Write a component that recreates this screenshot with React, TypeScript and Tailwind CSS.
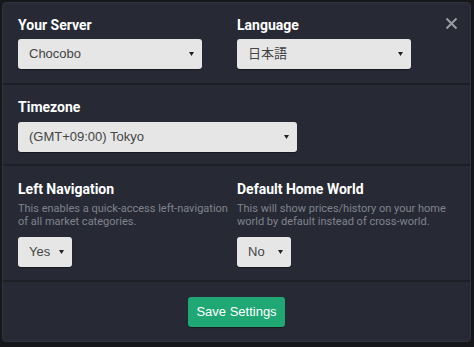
import React from "react"

function FakeSelect({ value, width }: { value: string; width: string }) {
  return (
    <div
      className={`${width} h-[30px] flex items-center justify-between pl-[11px] pr-[8px] bg-[#e6e6e6] rounded-[3px] shadow-[0_1px_1px_rgba(0,0,0,0.4)] text-[13px] text-[#444] font-['Liberation_Sans','Noto_Sans_CJK_JP',sans-serif]`}
    >
      <span>{value}</span>
      <svg width="5" height="4" viewBox="0 0 5 4" className="text-[#222]">
        <path d="M0 0 L5 0 L2.5 4 Z" fill="currentColor" />
      </svg>
    </div>
  )
}

export default function App() {
  return (
    <div className="w-[474px] h-[347px] bg-[#16171b] p-[2px] pr-[3px] pb-[5px] font-['Roboto',sans-serif]">
      <div className="relative h-full bg-[#272a35] rounded-[4px] border border-[#30333e] flex flex-col">
        {/* close */}
        <button className="absolute right-[12px] top-[14px] text-[#9a9ca3]">
          <svg width="13" height="13" viewBox="0 0 13 13">
            <path d="M1.5 1.5 L11.5 11.5 M11.5 1.5 L1.5 11.5" stroke="currentColor" strokeWidth="2" />
          </svg>
        </button>

        {/* Server / Language */}
        <div className="flex px-[15px] pt-[13px] h-[82px] border-b-2 border-[#1d1f26]">
          <div className="w-[219px]">
            <div className="text-[14px] font-bold text-white leading-[18px] mb-[5px]">Your Server</div>
            <FakeSelect value="Chocobo" width="w-[184px]" />
          </div>
          <div className="flex-1">
            <div className="text-[14px] font-bold text-white leading-[18px] mb-[5px]">Language</div>
            <FakeSelect value="日本語" width="w-[174px]" />
          </div>
        </div>

        {/* Timezone */}
        <div className="px-[15px] pt-[13px] h-[81px] border-b-2 border-[#1d1f26]">
          <div className="text-[14px] font-bold text-white leading-[18px] mb-[6px]">Timezone</div>
          <FakeSelect value="(GMT+09:00) Tokyo" width="w-[279px]" />
        </div>

        {/* Navigation / Home world */}
        <div className="flex px-[15px] pt-[14px] h-[116px] border-b-2 border-[#1d1f26]">
          <div className="w-[219px]">
            <div className="text-[14px] font-bold text-white leading-[18px] mb-[4px]">Left Navigation</div>
            <p className="text-[11px] leading-[13px] text-[#80838d] mb-[9px] pr-[4px]">
              This enables a quick-access left-navigation of all market categories.
            </p>
            <FakeSelect value="Yes" width="w-[54px]" />
          </div>
          <div className="flex-1">
            <div className="text-[14px] font-bold text-white leading-[18px] mb-[4px]">Default Home World</div>
            <p className="text-[11px] leading-[13px] text-[#80838d] mb-[9px] pr-[8px]">
              This will show prices/history on your home world by default instead of cross-world.
            </p>
            <FakeSelect value="No" width="w-[54px]" />
          </div>
        </div>

        {/* footer */}
        <div className="flex-1 flex items-start justify-center pt-[15px]">
          <button className="h-[30px] px-[8px] bg-[#1fa774] rounded-[3px] text-white text-[13px] font-['Liberation_Sans',sans-serif] shadow-[0_1px_1px_rgba(0,0,0,0.4)]">
            Save Settings
          </button>
        </div>
      </div>
    </div>
  )
}
